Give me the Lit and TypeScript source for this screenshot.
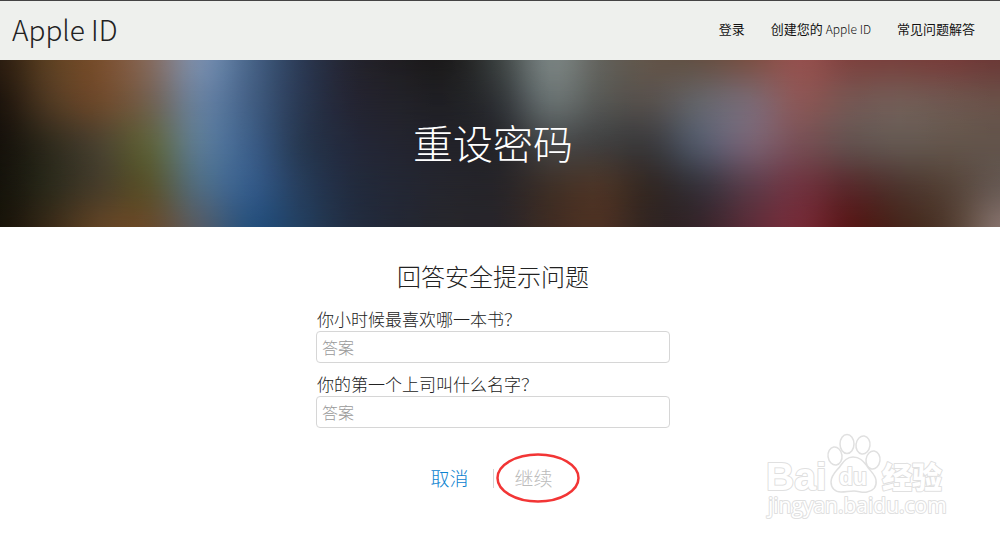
import { LitElement, html, css } from "lit";
import { customElement } from "lit/decorators.js";

/** Key colours of the blurred hero backdrop, evenly spaced on a 21 by 5 grid. */
const BACKDROP: number[][][] = [
  "2a1c10 5f4223 7a4e2c 876a5c 7c93b4 48658a 2b3a55 24242f 1f1d20 1b1a1a 3d4342 7f8988 62625c 635549 634f42 7b4f42 98514f 7e413e 78403c 773b39 6a3836",
  "1a120b 523b24 70492a 72604f 6883a4 425f85 293852 242432 222229 1f1f23 2e3135 6c7676 565754 57504c 65676d 7a6c78 8e5755 755854 735f58 6e5850 6a5249",
  "14100a 2e2a1c 4a4231 5f6437 5e7f9c 3c5f8b 26374f 23283a 23242f 222229 242429 47494a 3f3f40 38383b 545d70 7b6577 784f55 625350 655a53 64564c 62544b",
  "14120a 2a2a1b 463c2b 585228 506f88 355d8e 263d5c 222b3e 232734 25252c 262428 3e2f26 4d3526 312621 33313a 5b3c4a 713340 57282a 4c352e 544237 655852",
  "161208 3a2a18 644525 6b4929 565c66 23507f 234061 222d41 232734 27262b 28252a 402c22 4f3123 2f2421 352329 5d2c38 792b38 571414 452419 4f3a2d 8a7670",
].map((row) =>
  row.split(" ").map((c) => [0, 2, 4].map((i) => parseInt(c.slice(i, i + 2), 16)))
);

/** Cubic B-spline with a share of Catmull-Rom, so that colours flow without edges. */
function spline(a: number, b: number, c: number, d: number, t: number): number {
  const t2 = t * t;
  const t3 = t2 * t;
  const soft =
    ((1 - t) ** 3 * a + (3 * t3 - 6 * t2 + 4) * b + (-3 * t3 + 3 * t2 + 3 * t + 1) * c + t3 * d) / 6;
  const exact =
    (2 * b + (c - a) * t + (2 * a - 5 * b + 4 * c - d) * t2 + (3 * b - a - 3 * c + d) * t3) / 2;
  return soft * 0.4 + exact * 0.6;
}

/** Puts `parts` smooth steps between each two neighbours of a list of number vectors. */
function refine(points: number[][], parts: number): number[][] {
  const at = (i: number) => points[Math.max(0, Math.min(points.length - 1, i))];
  const total = (points.length - 1) * parts;
  return Array.from({ length: total + 1 }, (_, n) => {
    const i = Math.floor(n / parts);
    const t = (n % parts) / parts;
    return at(i).map((_, k) => spline(at(i - 1)[k], at(i)[k], at(i + 1)[k], at(i + 2)[k], t));
  });
}

const ROWS: string[] = refine(
  BACKDROP.map((row) => refine(row, 6).flat()),
  4
).map((flat) => {
  const stops: string[] = [];
  for (let i = 0; i < flat.length; i += 3) {
    stops.push(`rgb(${flat.slice(i, i + 3).map((v) => Math.max(0, Math.round(v))).join(" ")})`);
  }
  return stops.join(",");
});

@customElement("hero-banner")
class HeroBanner extends LitElement {
  static styles = css`
    :host {
      display: grid;
      position: relative;
      overflow: hidden;
      place-items: center;
      padding: 52px 14px 55px 0;
      background: #222229;
    }
    .layer {
      position: absolute;
      inset: 0;
    }
    .title {
      position: relative;
      margin: 0;
      font-size: 40px;
      font-weight: 300;
      line-height: 60px;
      color: #fff;
    }
  `;

  private layerStyle(stops: string, index: number) {
    const step = 100 / (ROWS.length - 1);
    const fill = `background:linear-gradient(90deg,${stops})`;
    return index === 0
      ? fill
      : `${fill};mask-image:linear-gradient(transparent ${(index - 1) * step}%,#000 ${index * step}%)`;
  }

  render() {
    return html`
      ${ROWS.map((stops, i) => html`<div class="layer" style=${this.layerStyle(stops, i)}></div>`)}
      <h1 class="title">重设密码</h1>
    `;
  }
}

@customElement("site-watermark")
class SiteWatermark extends LitElement {
  static styles = css`
    :host {
      display: block;
      width: 190px;
    }
    svg {
      display: block;
      overflow: visible;
    }
    .shape {
      fill: #fff;
      stroke: #e0e0e0;
      stroke-width: 1.5;
    }
    .text {
      fill: #fff;
      stroke: #e0e0e0;
      stroke-width: 2;
      paint-order: stroke;
      stroke-linejoin: round;
      font-family: "Liberation Sans", sans-serif;
      font-weight: 700;
    }
    .latin {
      font-size: 39px;
    }
    .du {
      font-size: 23px;
    }
    .han {
      font-size: 30px;
      font-weight: 900;
      font-family: "Noto Sans CJK SC", sans-serif;
    }
    .url {
      font-size: 21px;
      font-weight: 400;
      font-family: "Open Sans", sans-serif;
    }
  `;

  render() {
    return html`
      <svg width="190" height="100" viewBox="0 0 190 100" aria-hidden="true">
        <text class="text latin" x="6" y="60">Bai</text>
        <ellipse class="shape" cx="75" cy="26" rx="7" ry="9" transform="rotate(-8 75 26)" />
        <ellipse class="shape" cx="87" cy="14" rx="7" ry="9.5" />
        <ellipse class="shape" cx="103" cy="15" rx="7" ry="9" transform="rotate(8 103 15)" />
        <ellipse class="shape" cx="113" cy="30" rx="7" ry="9" transform="rotate(8 113 30)" />
        <path
          class="shape"
          d="M93 27c-6 0-9 4-12 8-3 5-10 9-10 17 0 6 4 10 10 10 5 0 8-1 13-1s8 2 13 1c6-1 10-5 9-12-1-6-6-9-9-14-4-5-7-9-14-9z"
        />
        <text class="text du" x="79" y="55">du</text>
        <text class="text han" x="122" y="58">经验</text>
        <text class="text url" x="8" y="83">jingyan.baidu.com</text>
      </svg>
    `;
  }
}

@customElement("app-root")
class AppRoot extends LitElement {
  static styles = css`
    :host {
      display: block;
      position: relative;
      min-height: 100vh;
      background: #fff;
      color: #222;
      font-family: "Noto Sans CJK SC", sans-serif;
      font-weight: 300;
    }
    .bar {
      display: flex;
      align-items: center;
      justify-content: space-between;
      box-sizing: border-box;
      min-height: 60px;
      padding: 0 25px 4px 12px;
      border-top: 1px solid #444;
      background: #eef0ed;
    }
    .brand {
      font-size: 28px;
      line-height: 44px;
      color: #222;
      text-decoration: none;
    }
    .nav {
      display: flex;
      gap: 26px;
    }
    .link {
      font-size: 13px;
      font-weight: 400;
      line-height: 20px;
      color: #111;
      text-decoration: none;
    }
    .latin {
      font-size: 12px;
      font-weight: 300;
    }
    .main {
      padding: 31px 14px 24px 0;
    }
    .form {
      display: flex;
      flex-direction: column;
      width: 354px;
      max-width: 100%;
      margin: 0 auto;
    }
    .heading {
      margin: 0 0 12px;
      font-size: 24px;
      font-weight: 300;
      line-height: 36px;
      text-align: center;
    }
    .field {
      display: flex;
      flex-direction: column;
      margin-bottom: 8px;
    }
    .label {
      padding-left: 1px;
      font-size: 17px;
      line-height: 25px;
    }
    .input {
      box-sizing: border-box;
      width: 100%;
      height: 32px;
      padding: 0 5px;
      border: 1px solid #d6d6d6;
      border-radius: 4px;
      background: #fff;
      color: #333;
      font: inherit;
      font-size: 16px;
    }
    .input::placeholder {
      color: #999;
      opacity: 1;
    }
    .actions {
      display: flex;
      align-items: center;
      justify-content: center;
      margin-top: 18px;
    }
    .action {
      padding: 0 24px;
      border: 0;
      background: none;
      color: #0b82cf;
      font: inherit;
      font-size: 19px;
      line-height: 48px;
    }
    .action:disabled {
      padding: 0 27px 0 21px;
      color: #bbb;
    }
    .divider {
      width: 1px;
      height: 19px;
      background: #d6d6d6;
    }
    .marked {
      position: relative;
      display: grid;
    }
    .ring {
      position: absolute;
      top: -1px;
      left: 2px;
      width: 84px;
      height: 50px;
      fill: none;
      stroke: #f23535;
      stroke-width: 2.5;
      pointer-events: none;
    }
    .watermark {
      position: absolute;
      right: 50px;
      bottom: 11px;
    }
  `;

  render() {
    return html`
      <header class="bar">
        <a class="brand" href="#">Apple ID</a>
        <nav class="nav">
          <a class="link" href="#">登录</a>
          <a class="link" href="#">创建您的 <span class="latin">Apple ID</span></a>
          <a class="link" href="#">常见问题解答</a>
        </nav>
      </header>
      <hero-banner></hero-banner>
      <main class="main">
        <form class="form">
          <h2 class="heading">回答安全提示问题</h2>
          <div class="field">
            <label class="label" for="book">你小时候最喜欢哪一本书？</label>
            <input class="input" id="book" type="text" placeholder="答案" />
          </div>
          <div class="field">
            <label class="label" for="boss">你的第一个上司叫什么名字？</label>
            <input class="input" id="boss" type="text" placeholder="答案" />
          </div>
          <div class="actions">
            <button class="action" type="button">取消</button>
            <span class="divider"></span>
            <span class="marked">
              <button class="action" type="submit" disabled>继续</button>
              <svg class="ring" viewBox="0 0 84 50" aria-hidden="true">
                <ellipse cx="42" cy="25" rx="40.5" ry="23.5" />
              </svg>
            </span>
          </div>
        </form>
      </main>
      <site-watermark class="watermark"></site-watermark>
    `;
  }
}
